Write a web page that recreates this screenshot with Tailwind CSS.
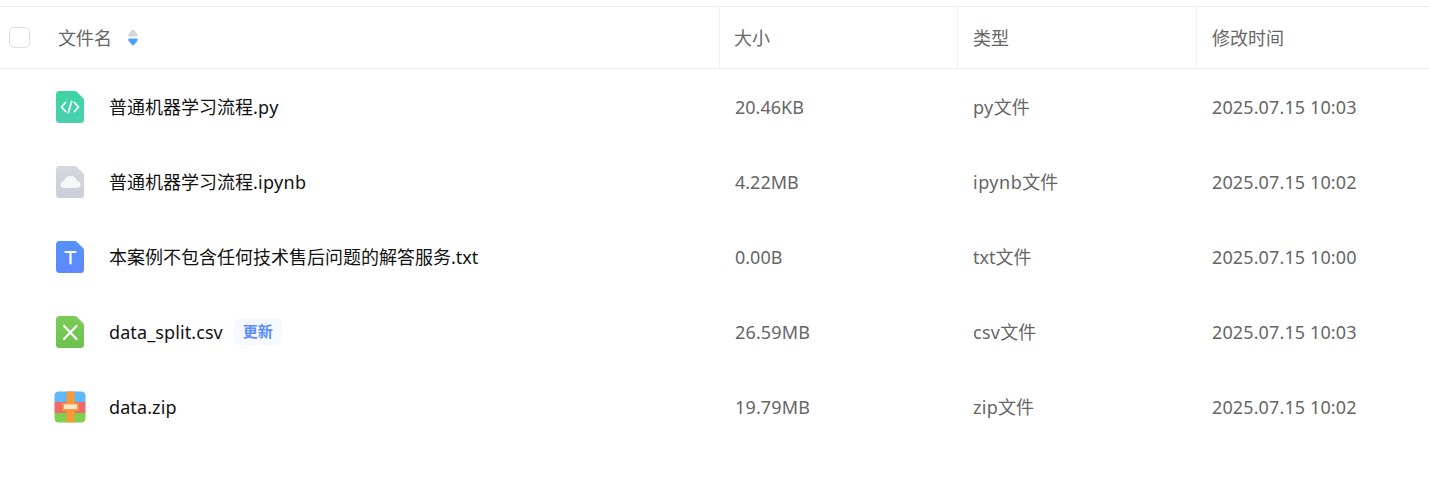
<!DOCTYPE html>
<html lang="zh-CN">
<head>
    <meta charset="UTF-8">
    <title>文件列表</title>
    <script src="https://cdn.jsdelivr.net/npm/@tailwindcss/browser@4"></script>
</head>
<body class="bg-white h-[500px] overflow-hidden font-['Noto_Sans','Noto_Sans_CJK_SC',sans-serif] text-[18px] text-[#666]">
    <div class="pt-[6px]">
        <!-- Header -->
        <div class="grid grid-cols-[720px_238px_239px_1fr] h-[63px] border-y border-[#f0f0f2]">
            <div class="flex items-center border-r border-[#f0f0f2]">
                <span class="ml-[9px] w-[21px] h-[21px] rounded-[5px] border-[1.5px] border-[#dedee0]"></span>
                <span class="ml-[28px] pt-[2px]">文件名</span>
                <svg class="ml-[16px]" width="10" height="17" viewBox="0 0 10 17">
                    <path d="M5 0.5 Q5.6 0.5 6 1 L9.5 5.2 Q10.4 7.5 8.5 7.5 L1.5 7.5 Q-0.4 7.5 0.5 5.2 L4 1 Q4.4 0.5 5 0.5 Z" fill="#d3d5da"/>
                    <path d="M1.5 9.5 L8.5 9.5 Q10.4 9.5 9.5 11.8 L6 16 Q5 16.8 4 16 L0.5 11.8 Q-0.4 9.5 1.5 9.5 Z" fill="#4aa3ff"/>
                </svg>
            </div>
            <div class="flex items-center pl-[14px] pt-[2px] border-r border-[#f0f0f2]">大小</div>
            <div class="flex items-center pl-[15px] pt-[2px] border-r border-[#f0f0f2]">类型</div>
            <div class="flex items-center pl-[15px] pt-[2px]">修改时间</div>
        </div>

        <!-- Rows -->
        <div class="grid grid-cols-[720px_238px_239px_1fr] h-[75px] items-center">
            <div class="flex items-center">
                <svg class="ml-[56px]" width="28" height="32" viewBox="0 0 28 32">
                    <defs><linearGradient id="g1" x1="0" y1="0" x2="0" y2="1"><stop offset="0" stop-color="#3cd6a0"/><stop offset="1" stop-color="#4acfae"/></linearGradient></defs>
                    <path d="M3.5 0 H19 Q20 0 21 1 L27 7 Q28 8 28 9 V28.5 Q28 32 24.5 32 H3.5 Q0 32 0 28.5 V3.5 Q0 0 3.5 0 Z" fill="url(#g1)"/>
                    <path d="M9.5 11.5 L5.5 16 L9.5 20.5 M18.5 11.5 L22.5 16 L18.5 20.5 M15.7 10.5 L12.3 21.5" fill="none" stroke="#fff" stroke-width="1.8" stroke-linecap="round" stroke-linejoin="round"/>
                </svg>
                <span class="ml-[25px] pt-[2px] text-[#111]">普通机器学习流程<span class="tracking-[0.3px]">.py</span></span>
            </div>
            <div class="pl-[15px] pt-[2px]">20.46KB</div>
            <div class="pl-[15px] pt-[2px]"><span class="tracking-[0.4px]">py</span>文件</div>
            <div class="pl-[15px] pt-[2px] tracking-[0.12px]">2025.07.15 10:03</div>
        </div>
        <div class="grid grid-cols-[720px_238px_239px_1fr] h-[75px] items-center">
            <div class="flex items-center">
                <svg class="ml-[56px]" width="28" height="32" viewBox="0 0 28 32">
                    <defs><linearGradient id="g2" x1="0" y1="0" x2="0" y2="1"><stop offset="0" stop-color="#d5d7de"/><stop offset="1" stop-color="#cbced6"/></linearGradient></defs>
                    <path d="M3.5 0 H19 Q20 0 21 1 L27 7 Q28 8 28 9 V28.5 Q28 32 24.5 32 H3.5 Q0 32 0 28.5 V3.5 Q0 0 3.5 0 Z" fill="url(#g2)"/>
                    <path d="M9 22 Q4.5 22 4.5 18.5 Q4.5 15.5 8 15 Q9 10 14.5 10 Q20 10 21 15 Q24.5 15.5 24.5 18.5 Q24.5 22 20 22 Z" fill="#f6f7f9"/>
                </svg>
                <span class="ml-[25px] pt-[2px] text-[#111]">普通机器学习流程<span class="tracking-[0.3px]">.ipynb</span></span>
            </div>
            <div class="pl-[15px] pt-[2px]">4.22MB</div>
            <div class="pl-[15px] pt-[2px]"><span class="tracking-[0.5px]">ipynb</span>文件</div>
            <div class="pl-[15px] pt-[2px] tracking-[0.12px]">2025.07.15 10:02</div>
        </div>
        <div class="grid grid-cols-[720px_238px_239px_1fr] h-[75px] items-center">
            <div class="flex items-center">
                <svg class="ml-[56px]" width="28" height="32" viewBox="0 0 28 32">
                    <defs><linearGradient id="g3" x1="0" y1="0" x2="0" y2="1"><stop offset="0" stop-color="#5592fb"/><stop offset="1" stop-color="#6088fd"/></linearGradient></defs>
                    <path d="M3.5 0 H19 Q20 0 21 1 L27 7 Q28 8 28 9 V28.5 Q28 32 24.5 32 H3.5 Q0 32 0 28.5 V3.5 Q0 0 3.5 0 Z" fill="url(#g3)"/>
                    <path d="M9.5 11 H19.5 M14.5 11 V22.5" fill="none" stroke="#fff" stroke-width="2.2" stroke-linecap="round"/>
                </svg>
                <span class="ml-[25px] pt-[2px] text-[#111]">本案例不包含任何技术售后问题的解答服务.txt</span>
            </div>
            <div class="pl-[15px] pt-[2px]">0.00B</div>
            <div class="pl-[15px] pt-[2px]">txt文件</div>
            <div class="pl-[15px] pt-[2px] tracking-[0.12px]">2025.07.15 10:00</div>
        </div>
        <div class="grid grid-cols-[720px_238px_239px_1fr] h-[75px] items-center">
            <div class="flex items-center">
                <svg class="ml-[56px]" width="28" height="32" viewBox="0 0 28 32">
                    <defs><linearGradient id="g4" x1="0" y1="0" x2="0" y2="1"><stop offset="0" stop-color="#7ccb58"/><stop offset="1" stop-color="#6dc24d"/></linearGradient></defs>
                    <path d="M3.5 0 H19 Q20 0 21 1 L27 7 Q28 8 28 9 V28.5 Q28 32 24.5 32 H3.5 Q0 32 0 28.5 V3.5 Q0 0 3.5 0 Z" fill="url(#g4)"/>
                    <path d="M8 10 L20.5 23 M20.5 10 L8 23" fill="none" stroke="#fff" stroke-width="2.2" stroke-linecap="round"/>
                </svg>
                <span class="ml-[25px] pt-[2px] text-[#111] tracking-[0.1px]">data_split.csv</span>
                <span class="ml-[11px] w-[48px] h-[26px] flex items-center justify-center rounded-[5px] bg-[#f5f8ff] text-[15px] font-bold text-[#5a8cff]">更新</span>
            </div>
            <div class="pl-[15px] pt-[2px] tracking-[0.15px]">26.59MB</div>
            <div class="pl-[15px] pt-[2px]"><span class="tracking-[0.3px]">csv</span>文件</div>
            <div class="pl-[15px] pt-[2px] tracking-[0.12px]">2025.07.15 10:03</div>
        </div>
        <div class="grid grid-cols-[720px_238px_239px_1fr] h-[75px] items-center">
            <div class="flex items-center">
                <svg class="ml-[54px]" width="32" height="32" viewBox="0 0 32 32">
                    <path d="M0.5 11 V5 Q0.5 0.5 5 0.5 H27 Q31.5 0.5 31.5 5 V11 Z" fill="#5fb8f5"/>
                    <rect x="0.5" y="11" width="31" height="11" fill="#f0686a"/>
                    <path d="M0.5 22 H31.5 V27 Q31.5 31.5 27 31.5 H5 Q0.5 31.5 0.5 27 Z" fill="#7ed04e"/>
                    <rect x="12.5" y="0.5" width="8" height="31" fill="#f79a3a"/>
                    <rect x="8" y="12" width="17" height="8" fill="#f79a3a"/>
                    <rect x="10" y="13.5" width="13" height="4.5" fill="#fbe6d4"/>
                </svg>
                <span class="ml-[23px] pt-[2px] text-[#111] tracking-[0.1px]">data.zip</span>
            </div>
            <div class="pl-[15px] pt-[2px] tracking-[0.15px]">19.79MB</div>
            <div class="pl-[15px] pt-[2px]"><span class="tracking-[0.3px]">zip</span>文件</div>
            <div class="pl-[15px] pt-[2px] tracking-[0.12px]">2025.07.15 10:02</div>
        </div>
    </div>
</body>
</html>
